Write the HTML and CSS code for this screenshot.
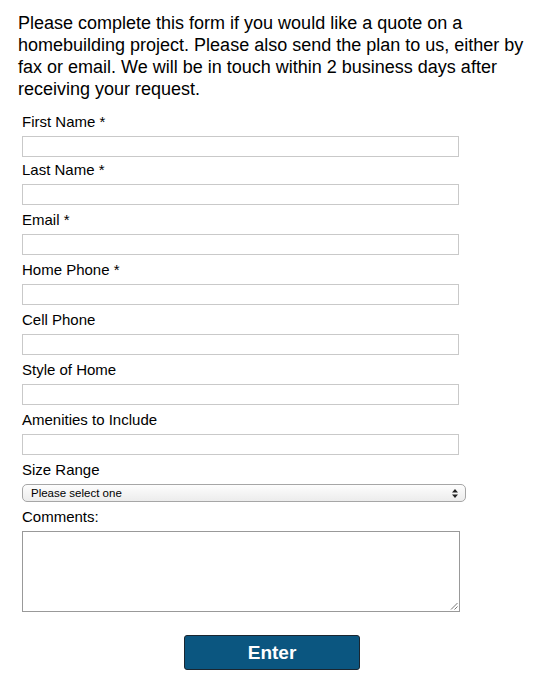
FILE: index.html
```html
<!DOCTYPE html>
<html>
<head>
<meta charset="utf-8">
<link rel="stylesheet" href="styles.css">
</head>
<body>
<div class="page">
  <p class="intro">Please complete this form if you would like a quote on a homebuilding project. Please also send the plan to us, either by fax or email. We will be in touch within 2 business days after receiving your request.</p>
  <form class="form">
    <div class="field first"><label>First Name *</label><input type="text" class="text"></div>
    <div class="field"><label>Last Name *</label><input type="text" class="text"></div>
    <div class="field"><label>Email *</label><input type="text" class="text"></div>
    <div class="field"><label>Home Phone *</label><input type="text" class="text"></div>
    <div class="field"><label>Cell Phone</label><input type="text" class="text"></div>
    <div class="field"><label>Style of Home</label><input type="text" class="text"></div>
    <div class="field"><label>Amenities to Include</label><input type="text" class="text"></div>
    <div class="field"><label>Size Range</label>
      <div class="select"><span class="select-text">Please select one</span>
        <svg class="arrows" width="6" height="9" viewBox="0 0 6 9"><path d="M3 0 L6 3.5 L0 3.5 Z M0 5.5 L6 5.5 L3 9 Z" fill="#222"/></svg>
      </div>
    </div>
    <div class="field"><label>Comments:</label>
      <div class="textarea">
        <svg class="grip" width="8" height="8" viewBox="0 0 8 8"><path d="M7.5 1 L1 7.5 M7.5 4.5 L4.5 7.5" stroke="#777" stroke-width="1"/></svg>
      </div>
    </div>
    <div class="actions"><button type="button" class="btn">Enter</button></div>
  </form>
</div>
</body>
</html>
```
FILE: styles.css
```css
html, body { margin: 0; padding: 0; background: #fff; }
body { font-family: "Liberation Sans", Arial, Helvetica, sans-serif; color: #000; }
.page { padding: 12px 0 0 18px; width: 514px; }
.intro { margin: 0; font-size: 18px; line-height: 22px; }
.form { margin: 13px 0 0 4px; width: 446px; }
.field { display: flex; flex-direction: column; margin-top: 6px; }
.field.first { margin-top: 0; }
.field + .field:nth-child(2) { margin-top: 4px; }
label { font-size: 15px; line-height: 18px; height: 18px; margin-bottom: 5px; }
.text { box-sizing: border-box; width: 437px; height: 21px; border: 1px solid #c9c9c9; margin: 0; padding: 0; background: #fff; }
.select { box-sizing: border-box; width: 444px; height: 18px; border: 1px solid #a6a6a6; border-radius: 5px; background: linear-gradient(#fdfdfd, #ececec); display: flex; align-items: center; justify-content: space-between; padding: 0 7px 0 8px; }
.select-text { font-size: 11.5px; line-height: 14px; }
.arrows { display: block; }
.textarea { box-sizing: border-box; width: 438px; height: 81px; border: 1px solid #999; position: relative; background: #fff; }
.grip { position: absolute; right: 1px; bottom: 1px; }
.actions { margin-top: 23px; padding-left: 162px; }
.btn { box-sizing: border-box; width: 176px; height: 35px; background: #0b5680; border: 1px solid #1b2630; border-radius: 3px; color: #fff; font-family: "Liberation Sans", Arial, sans-serif; font-weight: bold; font-size: 19px; padding: 0; }
```
